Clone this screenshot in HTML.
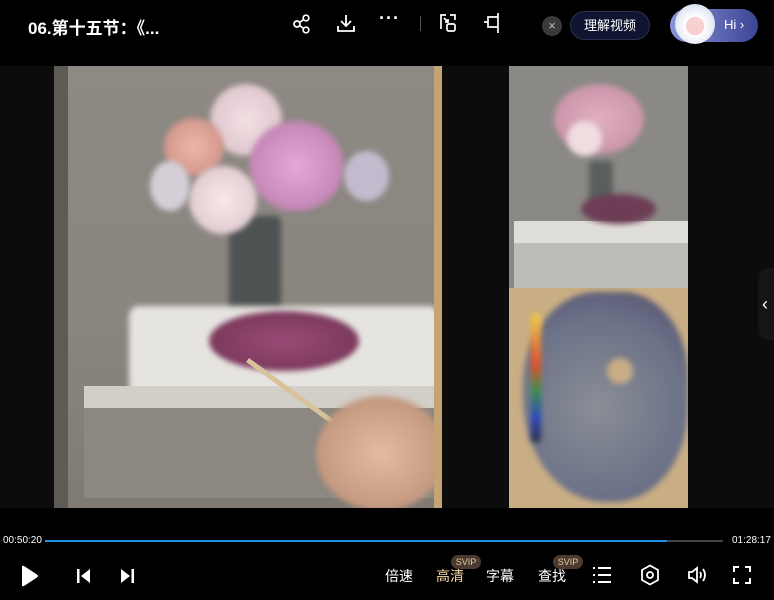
<!DOCTYPE html>
<html><head><meta charset="utf-8"><style>
*{margin:0;padding:0;box-sizing:border-box}
body{width:774px;height:600px;background:#000;position:relative;overflow:hidden;font-family:"Liberation Sans","Noto Sans CJK SC",sans-serif;color:#fff}
.a{position:absolute}
.vid{left:0;top:66px;width:774px;height:442px;background:#0c0c0c}
.left{left:54px;top:66px;width:388px;height:442px;background:linear-gradient(#8d8983,#8a857f 60%,#7f7a73);overflow:hidden}
.rt{left:509px;top:66px;width:179px;height:222px;background:#8a8985;overflow:hidden}
.rb{left:509px;top:288px;width:179px;height:220px;background:#c9ad85;overflow:hidden}
.blob{position:absolute;border-radius:50%;filter:blur(3px)}
.ctl{font-size:14px;top:566px}
svg{position:absolute}
</style></head><body>
<div class="a" style="left:28px;top:14px;font-size:17px;font-weight:bold">06.第十五节：《...</div>
<svg style="left:292px;top:14px" width="20" height="20" viewBox="0 0 20 20" fill="none" stroke="#fff" stroke-width="1.7"><circle cx="5" cy="10" r="3"/><circle cx="14" cy="4" r="2.8"/><circle cx="14" cy="16" r="2.8"/><path d="M7.5 8.5 11.5 5.5M7.5 11.5 11.5 14.5"/></svg>
<svg style="left:336px;top:13px" width="20" height="20" viewBox="0 0 20 20" fill="none" stroke="#fff" stroke-width="1.8"><path d="M10 2v11M5 8l5 5 5-5M2 13v5h16v-5"/></svg>
<div class="a" style="left:379px;top:8px;font-size:18px;letter-spacing:1px;font-weight:bold">···</div>
<div class="a" style="left:420px;top:16px;width:1px;height:15px;background:#555"></div>
<svg style="left:438px;top:13px" width="20" height="20" viewBox="0 0 20 20" fill="none" stroke="#fff" stroke-width="1.7"><path d="M8 2H3v14M12 2h5v5M6 5l4 4M10 6v3H7"/><rect x="9" y="11" width="8" height="7" rx="1.5"/></svg>
<svg style="left:482px;top:12px" width="20" height="22" viewBox="0 0 20 22" fill="none" stroke="#fff" stroke-width="1.7"><path d="M16 1v20M16 5H6v10h10M6 10H2"/></svg>
<div class="a" style="left:542px;top:16px;width:20px;height:20px;border-radius:50%;background:#3a3a3a;color:#bbb;font-size:13px;text-align:center;line-height:20px">×</div>
<div class="a" style="left:570px;top:11px;width:80px;height:29px;border-radius:15px;background:#0f1530;border:1px solid #2a3050;font-size:13px;text-align:center;line-height:27px">理解视频</div>
<div class="a" style="left:670px;top:9px;width:88px;height:33px;border-radius:17px;background:linear-gradient(90deg,#8a95d8,#3c4494)"></div>
<div class="a" style="left:675px;top:4px;width:40px;height:40px;border-radius:50%;background:radial-gradient(circle at 50% 55%,#f8d0d0 30%,#fff 32%,#e8ecf5 60%,#b8c6e6)"></div>
<div class="a" style="left:724px;top:17px;font-size:13px">Hi ›</div>

<div class="a vid"></div>
<div class="a left">
 <div class="a" style="left:0;top:0;width:14px;height:442px;background:#5e5a55"></div>
 <div class="blob" style="left:175px;top:150px;width:52px;height:120px;border-radius:6px;background:#4e5252"></div>
 <div class="blob" style="left:156px;top:18px;width:72px;height:72px;background:radial-gradient(#f4e0e4,#d6bcc4)"></div>
 <div class="blob" style="left:195px;top:55px;width:95px;height:90px;background:radial-gradient(#e4a8d8,#b678a6)"></div>
 <div class="blob" style="left:110px;top:52px;width:60px;height:58px;background:radial-gradient(#eeb6a8,#c88a80)"></div>
 <div class="blob" style="left:135px;top:100px;width:68px;height:68px;background:radial-gradient(#f8e8ea,#d8c2c8)"></div>
 <div class="blob" style="left:96px;top:95px;width:40px;height:50px;background:#d4ced6"></div>
 <div class="blob" style="left:290px;top:85px;width:45px;height:50px;background:#c4bace"></div>
 <div class="blob" style="left:75px;top:240px;width:310px;height:90px;background:#e6e4e0;border-radius:10px"></div>
 <div class="a" style="left:30px;top:320px;width:350px;height:22px;background:#d2cec8"></div>
 <div class="a" style="left:30px;top:342px;width:350px;height:90px;background:#8c8780"></div>
 <div class="blob" style="left:155px;top:245px;width:150px;height:60px;background:radial-gradient(#9a4c76,#6e3050)"></div>
 <div class="a" style="left:195px;top:292px;width:210px;height:5px;background:#d8c29a;transform:rotate(36deg);transform-origin:0 0"></div>
 <div class="blob" style="left:262px;top:330px;width:130px;height:115px;background:radial-gradient(#e4bca0,#b48870)"></div>
 <div class="a" style="left:380px;top:0;width:8px;height:442px;background:#c4a374"></div>
</div>
<div class="a rt">
 <div class="blob" style="left:80px;top:95px;width:24px;height:45px;border-radius:4px;background:#5a5e5e"></div>
 <div class="blob" style="left:45px;top:18px;width:90px;height:70px;background:radial-gradient(#e2b0c2,#c08aa0)"></div>
 <div class="blob" style="left:58px;top:55px;width:35px;height:35px;background:#efdde0"></div>
 <div class="a" style="left:5px;top:155px;width:174px;height:22px;background:#e0dedb"></div>
 <div class="a" style="left:5px;top:177px;width:174px;height:45px;background:#bdbcb8"></div>
 <div class="blob" style="left:72px;top:128px;width:75px;height:30px;background:#6d3d56"></div>
</div>
<div class="a rb">
 <div class="blob" style="left:14px;top:4px;width:165px;height:210px;border-radius:45% 40% 45% 50%;background:radial-gradient(circle at 45% 55%,#8a8e96,#6c7288 60%,#504a6a)"></div>
 <div class="blob" style="left:98px;top:70px;width:26px;height:26px;background:#c9ad85"></div>
 <div class="blob" style="left:22px;top:25px;width:10px;height:130px;border-radius:5px;background:linear-gradient(#ecd04a,#e55028 40%,#3a9048 60%,#2c48c0 80%,#303040)"></div>
</div>
<div class="a" style="left:758px;top:268px;width:16px;height:72px;border-radius:10px 0 0 10px;background:#151515;color:#fff;font-size:18px;line-height:72px;padding-left:4px">‹</div>

<div class="a" style="left:3px;top:535px;font-size:10px">00:50:20</div>
<div class="a" style="left:45px;top:540px;width:678px;height:2px;background:#444"></div>
<div class="a" style="left:45px;top:540px;width:622px;height:2px;background:#1e8fe0"></div>
<div class="a" style="left:732px;top:535px;font-size:10px">01:28:17</div>

<svg style="left:19px;top:564px" width="20" height="24" viewBox="0 0 20 24"><path d="M3 3Q3 1 5 2L18 10.5Q20 12 18 13.5L5 22Q3 23 3 21Z" fill="#fff"/></svg>
<svg style="left:76px;top:568px" width="16" height="16" viewBox="0 0 16 16" fill="#fff"><rect x="1" y="1" width="2.5" height="14"/><path d="M14 1 5 8l9 7z"/></svg>
<svg style="left:119px;top:568px" width="16" height="16" viewBox="0 0 16 16" fill="#fff"><rect x="12.5" y="1" width="2.5" height="14"/><path d="M2 1l9 7-9 7z"/></svg>
<div class="a ctl" style="left:385px">倍速</div>
<div class="a ctl" style="left:436px;color:#f3d9a8">高清</div>
<div class="a ctl" style="left:486px">字幕</div>
<div class="a ctl" style="left:538px">查找</div>
<div class="a" style="left:451px;top:555px;width:30px;height:14px;border-radius:7px;background:#4a3a30;color:#e8c8a0;font-size:9px;text-align:center;line-height:14px">SVIP</div>
<div class="a" style="left:553px;top:555px;width:30px;height:14px;border-radius:7px;background:#4a3a30;color:#e8c8a0;font-size:9px;text-align:center;line-height:14px">SVIP</div>
<svg style="left:592px;top:566px" width="20" height="18" viewBox="0 0 20 18" stroke="#fff" stroke-width="2"><path d="M1 2h2M6 2h13M1 9h2M6 9h13M1 16h2M6 16h13"/></svg>
<svg style="left:640px;top:564px" width="20" height="22" viewBox="0 0 20 22" fill="none" stroke="#fff" stroke-width="1.8"><path d="M10 1.5 18 6v10l-8 4.5L2 16V6z"/><circle cx="10" cy="11" r="3"/></svg>
<svg style="left:686px;top:564px" width="22" height="22" viewBox="0 0 22 22" fill="none" stroke="#fff" stroke-width="1.8"><path d="M3 8h3l5-4v14l-5-4H3z"/><path d="M14 8q2 3 0 6M17 5q4 6 0 12"/></svg>
<svg style="left:733px;top:566px" width="18" height="18" viewBox="0 0 18 18" fill="none" stroke="#fff" stroke-width="2"><path d="M1 6V1h5M12 1h5v5M17 12v5h-5M6 17H1v-5"/></svg>
</body></html>
